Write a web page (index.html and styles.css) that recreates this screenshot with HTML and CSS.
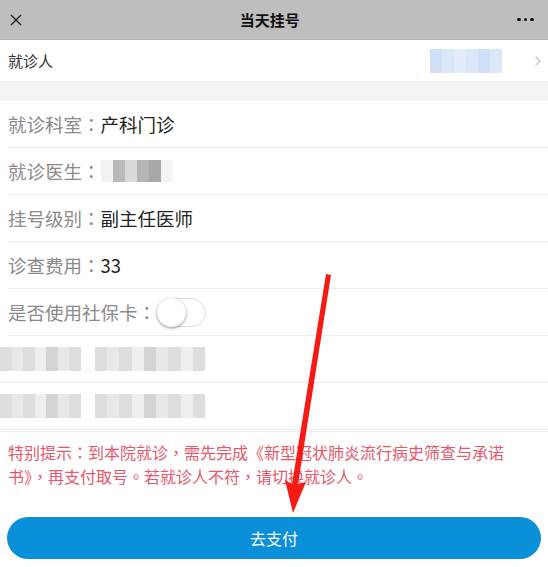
FILE: index.html
```html
<!DOCTYPE html>
<html lang="zh-CN">
<head>
    <meta charset="UTF-8">
    <meta name="viewport" content="width=device-width, initial-scale=1.0">
    <title>当天挂号</title>
    <link rel="stylesheet" href="styles.css">
</head>
<body>
    <div class="page">
        <div class="topbar">
            <svg class="close" width="12" height="12" viewBox="0 0 12 12">
                <path d="M1 1 L11 11 M11 1 L1 11" stroke="#222" stroke-width="1.4" fill="none"/>
            </svg>
            <div class="title">当天挂号</div>
            <div class="more"><span></span><span></span><span></span></div>
        </div>

        <div class="patient">
            <span>就诊人</span>
            <div class="patient-right">
                <div class="blur blue">
                    <i></i><i></i><i></i><i></i><i></i><i></i>
                </div>
                <svg width="8" height="12" viewBox="0 0 8 12">
                    <path d="M1.5 1.5 L6 6 L1.5 10.5" stroke="#c4c4c4" stroke-width="1.3" fill="none"/>
                </svg>
            </div>
        </div>

        <div class="gap"></div>

        <div class="form">
            <div class="row"><span class="label" lang="zh-TW">就诊科室：</span><span class="value">产科门诊</span></div>
            <div class="row"><span class="label" lang="zh-TW">就诊医生：</span>
                <div class="blur grey small"><i></i><i></i><i></i><i></i><i></i><i></i></div>
            </div>
            <div class="row"><span class="label" lang="zh-TW">挂号级别：</span><span class="value">副主任医师</span></div>
            <div class="row"><span class="label" lang="zh-TW">诊查费用：</span><span class="value">33</span></div>
            <div class="row"><span class="label" lang="zh-TW">是否使用社保卡：</span>
                <div class="switch"><div class="knob"></div></div>
            </div>
            <div class="row hidden-row">
                <div class="blur light w80"><i></i><i></i><i></i><i></i><i></i><i></i><i></i></div>
                <div class="blur light w110"><i></i><i></i><i></i><i></i><i></i><i></i><i></i><i></i><i></i></div>
            </div>
            <div class="row hidden-row">
                <div class="blur light w80"><i></i><i></i><i></i><i></i><i></i><i></i><i></i></div>
                <div class="blur light w110"><i></i><i></i><i></i><i></i><i></i><i></i><i></i><i></i><i></i></div>
            </div>
        </div>

        <p class="tip" lang="zh-TW">特别提示：到本院就诊，需先完成《新型冠状肺炎流行病史筛查与承诺书》，再支付取号。若就诊人不符，请切换就诊人。</p>

        <button class="pay">去支付</button>

        <svg class="arrow" width="548" height="567" viewBox="0 0 548 567">
            <polygon points="326,274 331,275 298,484 306,482 293,513 285,480 292,484" fill="#f51a14"/>
        </svg>
    </div>
</body>
</html>
```

FILE: styles.css
```css
*{
    margin: 0;
    padding: 0;
    box-sizing: border-box;
}

body{
    font-family: "Noto Sans CJK SC", "Noto Sans", sans-serif;
    background: #fff;
    color: #333;
}

.page{
    position: relative;
    width: 548px;
    height: 567px;
    overflow: hidden;
}

.topbar{
    height: 40px;
    background: #bebebe;
    display: flex;
    align-items: center;
    justify-content: space-between;
    padding: 0 14px 0 9px;
    border-bottom: 1px solid #b2b2b2;
}

.close{
    margin-left: 1px;
}

.title{
    font-size: 15px;
    font-weight: 700;
    color: #111;
}

.more{
    display: flex;
    gap: 3px;
}

.more span{
    width: 3.5px;
    height: 3.5px;
    border-radius: 50%;
    background: #111;
}

.patient{
    height: 41px;
    display: flex;
    align-items: center;
    justify-content: space-between;
    padding: 0 6px 0 8px;
    font-size: 15px;
    color: #333;
}

.patient-right{
    display: flex;
    align-items: center;
    gap: 32px;
}

.gap{
    height: 20px;
    background: #f4f4f4;
}

.form{
    padding-left: 8px;
}

.row{
    height: 47px;
    border-bottom: 1px solid #ececec;
    display: flex;
    align-items: center;
    font-size: 18.5px;
}

.label{
    color: #8a8a8a;
    font-family: "Noto Sans CJK TC", "Noto Sans CJK SC", sans-serif;
}

.value{
    color: #222;
}

.blur{
    display: flex;
    height: 24px;
    filter: blur(0.6px);
}

.blur i{
    flex: 1;
}

.blue{
    width: 72px;
    background: #d9e7f8;
}
.blue i:nth-child(odd){ background: #cfe0f6; }
.blue i:nth-child(3){ background: #e3edf9; }
.blue i:nth-child(6){ background: #dbe8f8; }

.small{
    width: 72px;
    height: 22px;
    background: #e6e6e6;
}
.small i:nth-child(1){ background: #f2f2f2; }
.small i:nth-child(2){ background: #b9b9b9; }
.small i:nth-child(3){ background: #d9d9d9; }
.small i:nth-child(4){ background: #b5b5b5; }
.small i:nth-child(5){ background: #a8a8a8; }
.small i:nth-child(6){ background: #f5f5f5; }

.hidden-row{
    margin-left: -8px;
    gap: 14px;
}

.light{
    background: #e8e8e8;
}
.light i:nth-child(odd){ background: #dedede; }
.light i:nth-child(4n){ background: #efefef; }
.light i:nth-child(5){ background: #d4d4d4; }

.w80{ width: 81px; }
.w110{ width: 110px; }

.switch{
    width: 49px;
    height: 29px;
    border: 1px solid #dadada;
    border-radius: 15px;
    background: #fff;
    position: relative;
    margin-left: 1px;
}

.knob{
    position: absolute;
    left: -1px;
    top: -1px;
    width: 29px;
    height: 29px;
    border-radius: 50%;
    background: #fff;
    box-shadow: 0 1px 3px rgba(0,0,0,0.45);
}

.tip{
    border-top: 1px solid #eeeeee;
    margin-top: 1px;
    padding: 8px 38px 0 8px;
    font-family: "Noto Sans CJK TC", "Noto Sans CJK SC", sans-serif;
    font-size: 16px;
    line-height: 24px;
    color: #e8566a;
}

.pay{
    display: block;
    margin: 29px 7px 0;
    width: 534px;
    height: 42px;
    border: none;
    border-radius: 21px;
    background: #0a8fd9;
    color: #fff;
    font-family: inherit;
    font-size: 16px;
}

.arrow{
    position: absolute;
    left: 0;
    top: 0;
    pointer-events: none;
}
```
